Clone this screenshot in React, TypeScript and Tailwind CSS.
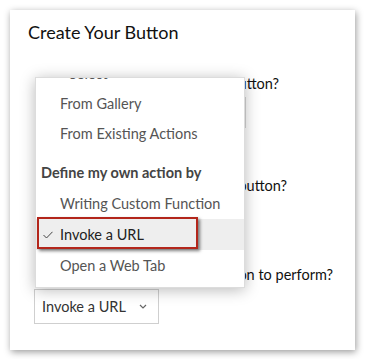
import React from "react";

const font = { fontFamily: "Lato, 'Open Sans', Arial, sans-serif" };

export default function App() {
  return (
    <div className="w-[365px] h-[359px] bg-white pt-[10px] pl-[10px]" style={font}>
      <div className="relative w-[345px] h-[340px] bg-white shadow-[1px_2px_7px_rgba(0,0,0,0.4)] pt-[10px]">
        <div className="pl-[18px] text-[18px] leading-[24px] text-[#111]">Create Your Button</div>

        <div className="w-[269px] mt-[30px] text-right text-[14.5px] leading-[20px] text-[#111] whitespace-nowrap">
          What should we name this button?
        </div>
        <div className="ml-[27px] mt-[3px] w-[209px] h-[31px] border border-[#d6d6d6]" />

        <div className="w-[277px] mt-[48px] text-right text-[14.5px] leading-[20px] text-[#111] whitespace-nowrap">
          Which action for this button?
        </div>
        <div className="ml-[27px] mt-[3px] w-[180px] h-[31px] border border-[#d6d6d6]" />

        <div className="w-[323px] mt-[35px] text-right text-[14.5px] leading-[20px] text-[#111] whitespace-nowrap">
          What action is the button to perform?
        </div>
        <div className="ml-[24px] mt-[4px] w-[125px] h-[35px] border border-[#cfcfcf] flex items-center pl-[7px] pr-[10px] justify-between text-[14.5px] text-[#333]">
          <span>Invoke a URL</span>
          <svg width="8" height="5" viewBox="0 0 8 5" className="mr-[1px]">
            <polyline points="1,1 4,4 7,1" fill="none" stroke="#666" strokeWidth="1.2" />
          </svg>
        </div>

        {/* Dropdown menu */}
        <div className="absolute left-[25px] top-[67px] w-[210px] h-[211px] bg-white border border-[#dcdcdc] shadow-[0_2px_14px_rgba(0,0,0,0.28)] overflow-hidden text-[14.5px]">
          <div className="mt-[-19px]">
            <div className="h-[30px] flex items-center pl-[33px] text-[#555]">Select</div>
            <div className="h-[30px] flex items-center pl-[24px] text-[#555]">From Gallery</div>
            <div className="h-[30px] flex items-center pl-[24px] text-[#555]">From Existing Actions</div>
            <div className="mt-[9px] h-[30px] flex items-center pl-[5px] font-bold text-[#444]">Define my own action by</div>
            <div className="h-[31px] flex items-center pl-[24px] text-[#555]">Writing Custom Function</div>
            <div className="relative h-[31px] flex items-center pl-[24px] bg-[#eeeeee] text-[#222]">
              <svg width="10" height="8" viewBox="0 0 10 8" className="absolute left-[7px] top-[12px]">
                <polyline points="0.5,4 3.5,7 9.5,0.8" fill="none" stroke="#444" strokeWidth="1" />
              </svg>
              <span>Invoke a URL</span>
              <div className="absolute left-[1px] top-[-2px] w-[161px] h-[32px] border-2 border-[#b3261b] shadow-[2px_2px_3px_rgba(0,0,0,0.5)]" />
            </div>
            <div className="h-[31px] flex items-center pl-[24px] text-[#555]">Open a Web Tab</div>
          </div>
        </div>
      </div>
    </div>
  );
}
